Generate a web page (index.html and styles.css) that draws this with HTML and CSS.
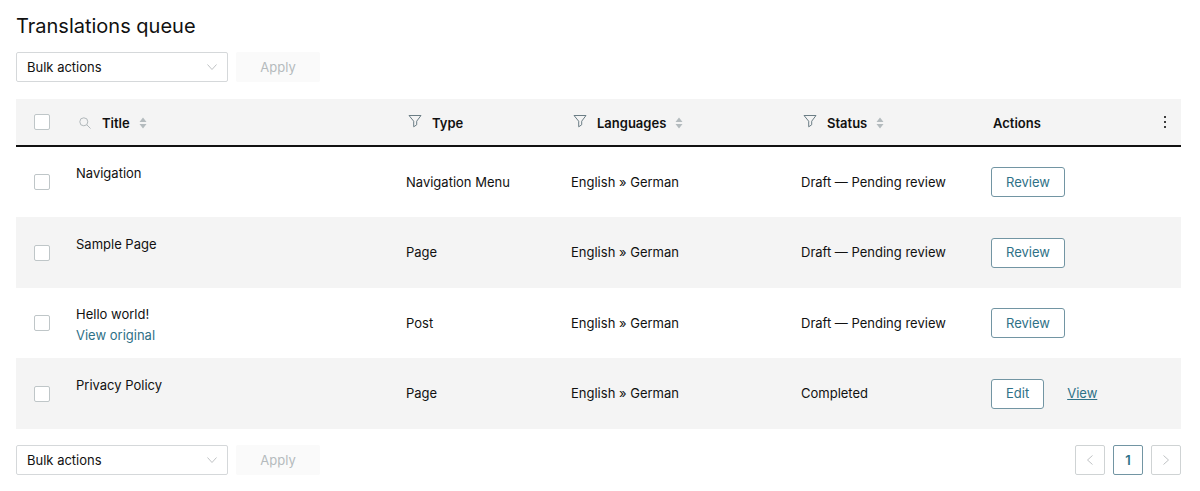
FILE: index.html
```html
<!DOCTYPE html>
<html lang="en">
<head>
    <meta charset="UTF-8">
    <meta name="viewport" content="width=device-width, initial-scale=1.0">
    <title>Translations queue</title>
    <link rel="stylesheet" href="styles.css">
</head>
<body>

    <!-- shared icons -->
    <svg class="sprite" aria-hidden="true">
        <symbol id="filter" viewBox="0 0 14 14">
            <path d="M1 1.5h12L8.7 7.2v3.6l-3 2V7.2z" fill="none" stroke="currentColor" stroke-linejoin="round"/>
        </symbol>
        <symbol id="sort" viewBox="0 0 8 12">
            <path d="M4 0.5L7.5 5h-7zM4 11.5L0.5 7h7z" fill="currentColor"/>
        </symbol>
        <symbol id="down" viewBox="0 0 12 12">
            <path d="M1.5 3.5L6 8.5l4.500-5" fill="none" stroke="currentColor"/>
        </symbol>
    </svg>

    <main class="container">
        <h1>Translations queue</h1>

        <form class="bulk">
            <label class="select">
                <select aria-label="Bulk actions">
                    <option>Bulk actions</option>
                </select>
                <svg class="arrow"><use href="#down"/></svg>
            </label>
            <button type="button" class="apply" disabled>Apply</button>
        </form>

        <table>
            <colgroup>
                <col class="col-check">
                <col>
                <col class="col-type">
                <col class="col-lang">
                <col class="col-status">
                <col class="col-actions">
                <col class="col-menu">
            </colgroup>
            <thead>
                <tr>
                    <th class="check"><input type="checkbox" aria-label="Select all"></th>
                    <th>
                        <div class="head">
                            <svg class="search" viewBox="0 0 12 12"><circle cx="4.800" cy="4.800" r="4" fill="none" stroke="currentColor"/><path d="M7.700 7.700L11.500 11.500" stroke="currentColor"/></svg>
                            Title
                            <svg class="sort"><use href="#sort"/></svg>
                        </div>
                    </th>
                    <th>
                        <div class="head">
                            <svg class="filter"><use href="#filter"/></svg>
                            Type
                        </div>
                    </th>
                    <th>
                        <div class="head">
                            <svg class="filter"><use href="#filter"/></svg>
                            Languages
                            <svg class="sort"><use href="#sort"/></svg>
                        </div>
                    </th>
                    <th>
                        <div class="head">
                            <svg class="filter"><use href="#filter"/></svg>
                            Status
                            <svg class="sort"><use href="#sort"/></svg>
                        </div>
                    </th>
                    <th class="actions-head">Actions</th>
                    <th class="menu">
                        <button type="button" class="dots" aria-label="Columns">
                            <svg viewBox="0 0 4 14"><circle cx="2" cy="2" r="1"/><circle cx="2" cy="7" r="1"/><circle cx="2" cy="12" r="1"/></svg>
                        </button>
                    </th>
                </tr>
            </thead>
            <tbody>
                <tr>
                    <td class="check"><input type="checkbox" aria-label="Select Navigation"></td>
                    <td><div class="title">Navigation</div></td>
                    <td>Navigation Menu</td>
                    <td>English » German</td>
                    <td>Draft — Pending review</td>
                    <td colspan="2"><div class="actions"><button type="button" class="btn">Review</button></div></td>
                </tr>
                <tr>
                    <td class="check"><input type="checkbox" aria-label="Select Sample Page"></td>
                    <td><div class="title">Sample Page</div></td>
                    <td>Page</td>
                    <td>English » German</td>
                    <td>Draft — Pending review</td>
                    <td colspan="2"><div class="actions"><button type="button" class="btn">Review</button></div></td>
                </tr>
                <tr>
                    <td class="check"><input type="checkbox" aria-label="Select Hello world!"></td>
                    <td><div class="title">Hello world!<a href="#">View original</a></div></td>
                    <td>Post</td>
                    <td>English » German</td>
                    <td>Draft — Pending review</td>
                    <td colspan="2"><div class="actions"><button type="button" class="btn">Review</button></div></td>
                </tr>
                <tr>
                    <td class="check"><input type="checkbox" aria-label="Select Privacy Policy"></td>
                    <td><div class="title">Privacy Policy</div></td>
                    <td>Page</td>
                    <td>English » German</td>
                    <td>Completed</td>
                    <td colspan="2"><div class="actions"><button type="button" class="btn">Edit</button><a href="#" class="view">View</a></div></td>
                </tr>
            </tbody>
        </table>

        <div class="footer">
            <form class="bulk">
                <label class="select">
                    <select aria-label="Bulk actions">
                        <option>Bulk actions</option>
                    </select>
                    <svg class="arrow"><use href="#down"/></svg>
                </label>
                <button type="button" class="apply" disabled>Apply</button>
            </form>
            <nav class="pages">
                <button type="button" class="page" disabled aria-label="Previous page"><svg viewBox="0 0 12 12"><path d="M8.500 1.500L3.500 6l5 4.500" fill="none" stroke="currentColor"/></svg></button>
                <button type="button" class="page current">1</button>
                <button type="button" class="page" disabled aria-label="Next page"><svg viewBox="0 0 12 12"><path d="M3.500 1.500L8.500 6l-5 4.500" fill="none" stroke="currentColor"/></svg></button>
            </nav>
        </div>
    </main>

</body>
</html>
```
FILE: styles.css
```css
* {
    box-sizing: border-box;
}

body {
    margin: 0;
    background-color: #fff;
    color: #111;
    font-family: Inter, "Liberation Sans", sans-serif;
    font-size: 13px;
    line-height: 21px;
}

button,
select {
    font: inherit;
    border-radius: 2px;
}

a {
    color: #2f7187;
    text-decoration: none;
}

.sprite {
    display: none;
}

.container {
    padding: 12px 19px 15px 16px;
}

h1 {
    margin: 0 0 12px;
    font-size: 20px;
    font-weight: 400;
    line-height: 28px;
}

.bulk {
    display: flex;
    gap: 8px;
}

.select {
    position: relative;
    width: 212px;
}

.select select {
    appearance: none;
    display: block;
    width: 100%;
    height: 30px;
    padding: 0 10px;
    border: 1px solid #d5d8da;
    background-color: #fff;
    color: #111;
}

.arrow {
    position: absolute;
    top: 9px;
    right: 10px;
    width: 12px;
    height: 12px;
    color: #c0c3c5;
    pointer-events: none;
}

.apply {
    width: 84px;
    height: 30px;
    border: 0;
    background-color: #fafafa;
    color: #b5babd;
}

table {
    width: 100%;
    margin: 17px 0 16px;
    table-layout: fixed;
    border-collapse: separate;
    border-spacing: 0;
}

.col-check {
    width: 52px;
}

.col-type {
    width: 165px;
}

.col-lang {
    width: 230px;
}

.col-status {
    width: 190px;
}

.col-actions {
    width: 166px;
}

.col-menu {
    width: 32px;
}

th {
    height: 48px;
    padding: 2px 8px 0;
    background-color: #f4f4f4;
    border-bottom: 2px solid #111;
    font-weight: 600;
    text-align: left;
}

td {
    height: 70px;
    padding: 0 8px;
}

tbody tr:nth-child(even) td {
    height: 71px;
    background-color: #f4f4f4;
}

.check {
    padding: 0;
    text-align: center;
}

.check input {
    appearance: none;
    display: block;
    width: 16px;
    height: 16px;
    margin: 0 auto;
    border: 1px solid #bfc6c8;
    border-radius: 2px;
    background-color: #fff;
}

.head {
    display: flex;
    align-items: center;
    gap: 9px;
}

.search {
    width: 12px;
    height: 12px;
    margin: 0 2px 0 3px;
    color: #b0b7ba;
}

.filter {
    width: 14px;
    height: 14px;
    margin: 0 1px 4px 2px;
    color: #6b7d85;
}

.sort {
    width: 8px;
    height: 12px;
    color: #b4bbbe;
}

th.actions-head {
    padding-left: 10px;
}

th.menu {
    padding: 0;
}

.dots {
    display: block;
    width: 32px;
    height: 32px;
    padding: 0;
    border: 0;
    background: none;
}

.dots svg {
    display: block;
    width: 4px;
    height: 14px;
    margin: 0 auto;
}

.title {
    min-height: 46px;
    padding-top: 4px;
}

.title a {
    display: block;
}

.actions {
    display: flex;
    align-items: center;
    gap: 23px;
}

.btn {
    height: 30px;
    padding: 0 14px;
    border: 1px solid #7295a3;
    border-radius: 3px;
    background-color: #fff;
    color: #2f7187;
}

.view {
    text-decoration: underline;
}

.footer {
    display: flex;
    justify-content: space-between;
}

.pages {
    display: flex;
    gap: 8px;
}

.page {
    width: 30px;
    height: 30px;
    padding: 0;
    border: 1px solid #cfd3d4;
    background-color: #fff;
    color: #c0c3c5;
}

.page svg {
    display: block;
    width: 12px;
    height: 12px;
    margin: 0 auto;
}

.current {
    border-color: #7295a3;
    color: #2f7187;
    font-weight: 600;
}
```
